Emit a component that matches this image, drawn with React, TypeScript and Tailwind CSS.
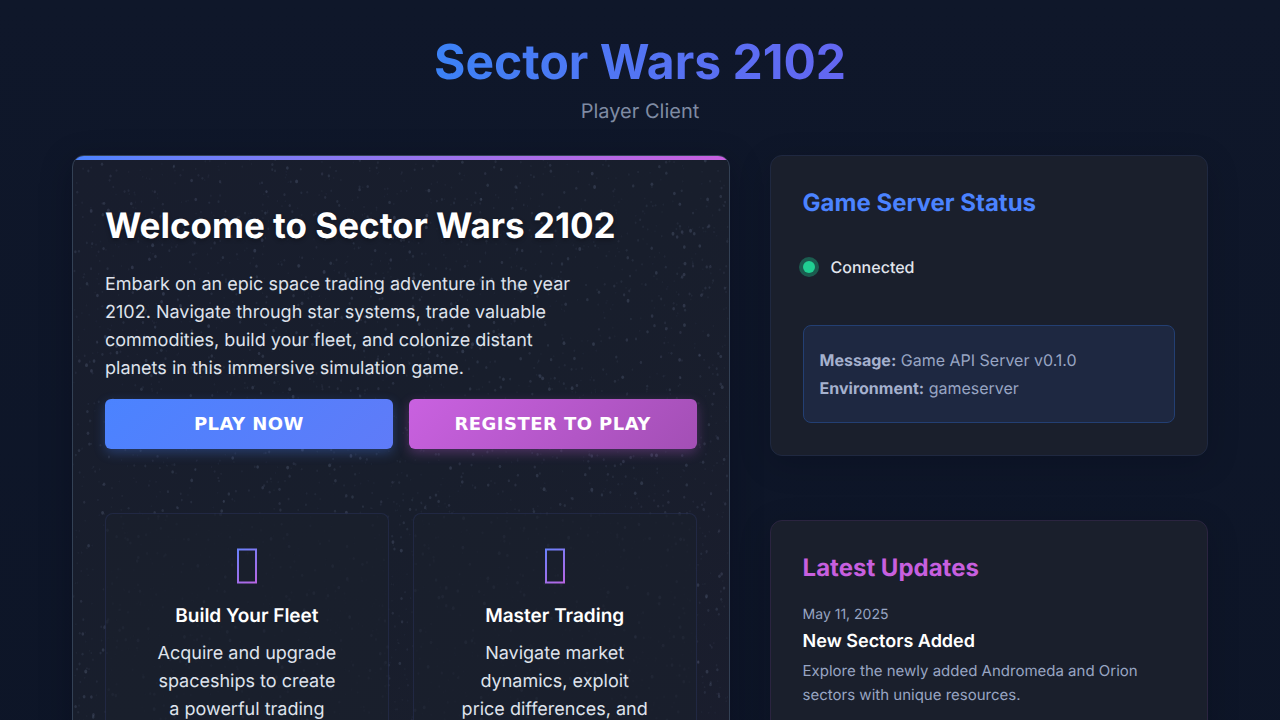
import type { ReactNode } from "react";

type Star = { x: number; y: number; r: number; o: number };

function makeStars(count: number, width: number, height: number): Star[] {
  let seed = 2102;
  const next = () => {
    seed = (seed + 0x6d2b79f5) | 0;
    let t = Math.imul(seed ^ (seed >>> 15), 1 | seed);
    t = (t + Math.imul(t ^ (t >>> 7), 61 | t)) ^ t;
    return ((t ^ (t >>> 14)) >>> 0) / 4294967296;
  };
  return Array.from({ length: count }, () => {
    const bright = next() ** 3;
    return {
      x: Math.round(next() * width * 10) / 10,
      y: Math.round(next() * height * 10) / 10,
      r: 0.8 + bright * 0.7,
      o: 0.04 + bright * 0.13,
    };
  });
}

const stars = makeStars(4600, 660, 760);

function Starfield() {
  return (
    <svg
      aria-hidden="true"
      className="absolute inset-0 h-full w-full"
      viewBox="0 0 660 760"
      preserveAspectRatio="xMidYMin slice"
    >
      {stars.map((s, i) => (
        <ellipse key={i} cx={s.x} cy={s.y} rx={s.r} ry={s.r * 1.3} fill="#a3b4dc" opacity={s.o} />
      ))}
    </svg>
  );
}

function FeatureIcon({ id }: { id: string }) {
  return (
    <svg aria-hidden="true" width="22" height="36" viewBox="0 0 22 36" fill="none">
      <defs>
        <linearGradient id={id} x1="0" y1="4" x2="22" y2="34" gradientUnits="userSpaceOnUse">
          <stop offset="0" stopColor="#6c80fb" />
          <stop offset="1" stopColor="#b865e2" />
        </linearGradient>
      </defs>
      <rect x="2" y="1.5" width="18" height="33" stroke={`url(#${id})`} strokeWidth="2" />
    </svg>
  );
}

function Feature({ id, title, children }: { id: string; title: string; children: ReactNode }) {
  return (
    <article className="flex flex-col items-center rounded-lg border border-[#5064c8]/15 bg-[#1a1f2c]/70 px-[47px] pt-[34px] pb-8 text-center">
      <FeatureIcon id={id} />
      <h3 className="mt-4 text-[19px] leading-8 font-semibold text-white">{title}</h3>
      <p className="mt-2 text-[18px] leading-7 text-[#dfe3ec]">{children}</p>
    </article>
  );
}

export default function App() {
  return (
    <div className="min-h-screen bg-[#0f172a] bg-linear-to-b from-[#0f172a] to-[#0d1527] font-['Inter',sans-serif] [text-rendering:geometricPrecision]">
      <div className="mx-auto max-w-[1200px] px-8 pt-8 pb-16">
        <header className="mb-7 flex flex-col items-center">
          <h1 className="bg-linear-to-r from-[#3b82f6] to-[#6366f1] bg-clip-text text-[48px] leading-[60px] font-bold text-transparent">
            Sector Wars 2102
          </h1>
          <p className="mt-[3px] text-[20px] leading-8 text-[#7f8ba3]">Player Client</p>
        </header>

        <main className="grid grid-cols-[3fr_2fr] items-start gap-10">
          <section className="relative overflow-hidden rounded-xl border border-[#334155] bg-[#181d2e] bg-linear-to-br from-[#181d2d] via-[#181e2c] to-[#1a1d2d] shadow-[0_8px_32px_rgba(0,0,20,0.3)]">
            <Starfield />
            <div className="relative">
              <div className="h-1 bg-linear-to-r from-[#4b83ff] to-[#c75fdf]" />
              <div className="px-8 pt-9 pb-16">
                <h2 className="text-[35px] leading-[60px] font-bold text-white [text-shadow:0_2px_4px_rgba(0,0,0,0.3)]">
                  Welcome to Sector Wars 2102
                </h2>
                <p className="mt-[15px] max-w-[480px] text-[18px] leading-7 text-[#dfe3ec]">
                  Embark on an epic space trading adventure in the year 2102. Navigate through star
                  systems, trade valuable commodities, build your fleet, and colonize distant planets in
                  this immersive simulation game.
                </p>
                <div className="mt-4 grid grid-cols-2 gap-4 font-['DejaVu_Sans',sans-serif] text-[18px] leading-6 font-bold tracking-wide text-white">
                  <button
                    type="button"
                    className="h-[50px] rounded-md bg-[linear-gradient(135deg,#4b83ff,#5f7bf8)] shadow-[0_4px_12px_rgba(75,131,255,0.3)]"
                  >
                    PLAY NOW
                  </button>
                  <button
                    type="button"
                    className="h-[50px] rounded-md bg-[linear-gradient(135deg,#c961e0,#a34fb5)] shadow-[0_4px_12px_rgba(199,95,223,0.3)]"
                  >
                    REGISTER TO PLAY
                  </button>
                </div>
                <div className="mt-16 grid grid-cols-2 gap-6">
                  <Feature id="fleet" title="Build Your Fleet">
                    Acquire and upgrade spaceships to create a powerful trading
                  </Feature>
                  <Feature id="trading" title="Master Trading">
                    Navigate market dynamics, exploit price differences, and
                  </Feature>
                </div>
              </div>
            </div>
          </section>

          <div className="flex flex-col gap-16">
            <section className="rounded-xl border border-[#1f2840] bg-[#1a1f2c] p-8 shadow-[0_8px_32px_rgba(0,0,20,0.2)]">
              <h2 className="text-[24px] leading-[30px] font-bold text-[#4b83ff]">Game Server Status</h2>
              <div className="mt-[35px] flex items-center gap-4">
                <span className="size-3 rounded-full bg-[#20cf92] shadow-[0_0_0_4px_rgba(32,207,146,0.35)]" />
                <span className="text-[16px] leading-7 font-medium text-[#e2e6ee]">Connected</span>
              </div>
              <div className="mt-11 rounded-lg border border-[#233f73] bg-[#1e2841] px-4 py-5 text-[16px] leading-7 text-[#98a5c3]">
                <p>
                  <strong className="font-bold text-[#a5b1ce]">Message:</strong> Game API Server v0.1.0
                </p>
                <p>
                  <strong className="font-bold text-[#a5b1ce]">Environment:</strong> gameserver
                </p>
              </div>
            </section>

            <section className="rounded-xl border border-[#2b2440] bg-[#1a1f2c] p-8 shadow-[0_8px_32px_rgba(0,0,20,0.2)]">
              <h2 className="text-[24px] leading-[30px] font-bold text-[#c75fdf]">Latest Updates</h2>
              <article className="mt-5">
                <time dateTime="2025-05-11" className="block text-[14px] leading-6 text-[#98a5c3]">
                  May 11, 2025
                </time>
                <h3 className="mt-px text-[18px] leading-7 font-semibold text-white">New Sectors Added</h3>
                <p className="mt-[3px] text-[15px] leading-6 text-[#98a5c3]">
                  Explore the newly added Andromeda and Orion sectors with unique resources.
                </p>
              </article>
            </section>
          </div>
        </main>
      </div>
    </div>
  );
}
